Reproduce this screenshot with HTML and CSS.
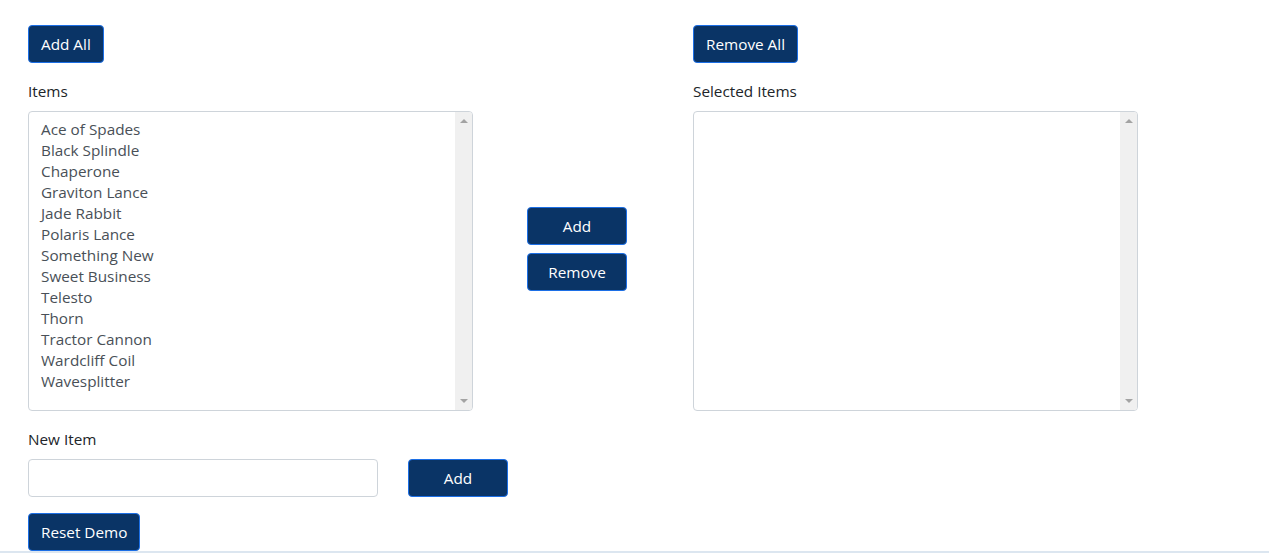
FILE: index.html
```html
<!DOCTYPE html>
<html>
<head>
<meta charset="utf-8">
<link rel="stylesheet" href="styles.css">
</head>
<body>
<div class="page">
  <div class="dual">
    <div class="col">
      <button class="btn">Add All</button>
      <label class="lbl">Items</label>
      <div class="listbox">
        <div class="list-items">
          <div class="opt">Ace of Spades</div>
          <div class="opt">Black Splindle</div>
          <div class="opt">Chaperone</div>
          <div class="opt">Graviton Lance</div>
          <div class="opt">Jade Rabbit</div>
          <div class="opt">Polaris Lance</div>
          <div class="opt">Something New</div>
          <div class="opt">Sweet Business</div>
          <div class="opt">Telesto</div>
          <div class="opt">Thorn</div>
          <div class="opt">Tractor Cannon</div>
          <div class="opt">Wardcliff Coil</div>
          <div class="opt">Wavesplitter</div>
        </div>
        <div class="scrollbar"><span class="arrow-up"></span><span class="arrow-down"></span></div>
      </div>
    </div>
    <div class="mid">
      <button class="btn btn-wide">Add</button>
      <button class="btn btn-wide">Remove</button>
    </div>
    <div class="col">
      <button class="btn">Remove All</button>
      <label class="lbl">Selected Items</label>
      <div class="listbox">
        <div class="list-items"></div>
        <div class="scrollbar"><span class="arrow-up"></span><span class="arrow-down"></span></div>
      </div>
    </div>
  </div>
  <label class="lbl lbl-new">New Item</label>
  <div class="new-row">
    <input class="field" type="text">
    <button class="btn btn-wide">Add</button>
  </div>
  <button class="btn btn-reset">Reset Demo</button>
</div>
<div class="footer-strip"></div>
</body>
</html>
```
FILE: styles.css
```css
html, body {
  margin: 0;
  padding: 0;
  background: #fff;
}
body {
  font-family: "Open Sans", "Noto Sans", "Liberation Sans", sans-serif;
  font-size: 15.3px;
  color: #212529;
}
.page {
  padding: 25px 28px 0 28px;
  display: flex;
  flex-direction: column;
  align-items: flex-start;
}
.dual {
  display: grid;
  grid-template-columns: 445px 220px 445px;
}
.col {
  display: flex;
  flex-direction: column;
  align-items: flex-start;
}
.btn {
  font-family: inherit;
  font-size: 15.3px;
  line-height: 24px;
  height: 38px;
  padding: 6px 12px;
  color: #fff;
  background: #0a3466;
  border: 1px solid #1c6fe6;
  border-radius: 4px;
  cursor: pointer;
}
.btn-wide {
  width: 100px;
}
.lbl {
  display: block;
  margin-top: 16px;
  margin-bottom: 8px;
  line-height: 24px;
}
.listbox {
  width: 445px;
  height: 300px;
  box-sizing: border-box;
  border: 1px solid #ced4da;
  border-radius: 4px;
  display: flex;
  overflow: hidden;
}
.list-items {
  flex: 1;
  padding: 7px 12px 6px 12px;
  color: #495057;
}
.opt {
  line-height: 21px;
  height: 21px;
  white-space: nowrap;
}
.scrollbar {
  width: 17px;
  background: #f0f0f0;
  display: flex;
  flex-direction: column;
  justify-content: space-between;
  align-items: center;
  padding: 7px 0;
}
.arrow-up {
  width: 0;
  height: 0;
  border-left: 4px solid transparent;
  border-right: 4px solid transparent;
  border-bottom: 4px solid #a3a3a3;
}
.arrow-down {
  width: 0;
  height: 0;
  border-left: 4px solid transparent;
  border-right: 4px solid transparent;
  border-top: 4px solid #a3a3a3;
}
.mid {
  display: flex;
  flex-direction: column;
  gap: 8px;
  padding-top: 182px;
  padding-left: 54px;
}
.lbl-new {
  margin-top: 16px;
}
.new-row {
  display: flex;
  gap: 30px;
}
.field {
  width: 350px;
  height: 38px;
  box-sizing: border-box;
  border: 1px solid #ced4da;
  border-radius: 4px;
  padding: 6px 12px;
  font-family: inherit;
  font-size: 15.3px;
}
.btn-reset {
  margin-top: 16px;
}
.footer-strip {
  height: 2px;
  background: #dce6f0;
}
```
